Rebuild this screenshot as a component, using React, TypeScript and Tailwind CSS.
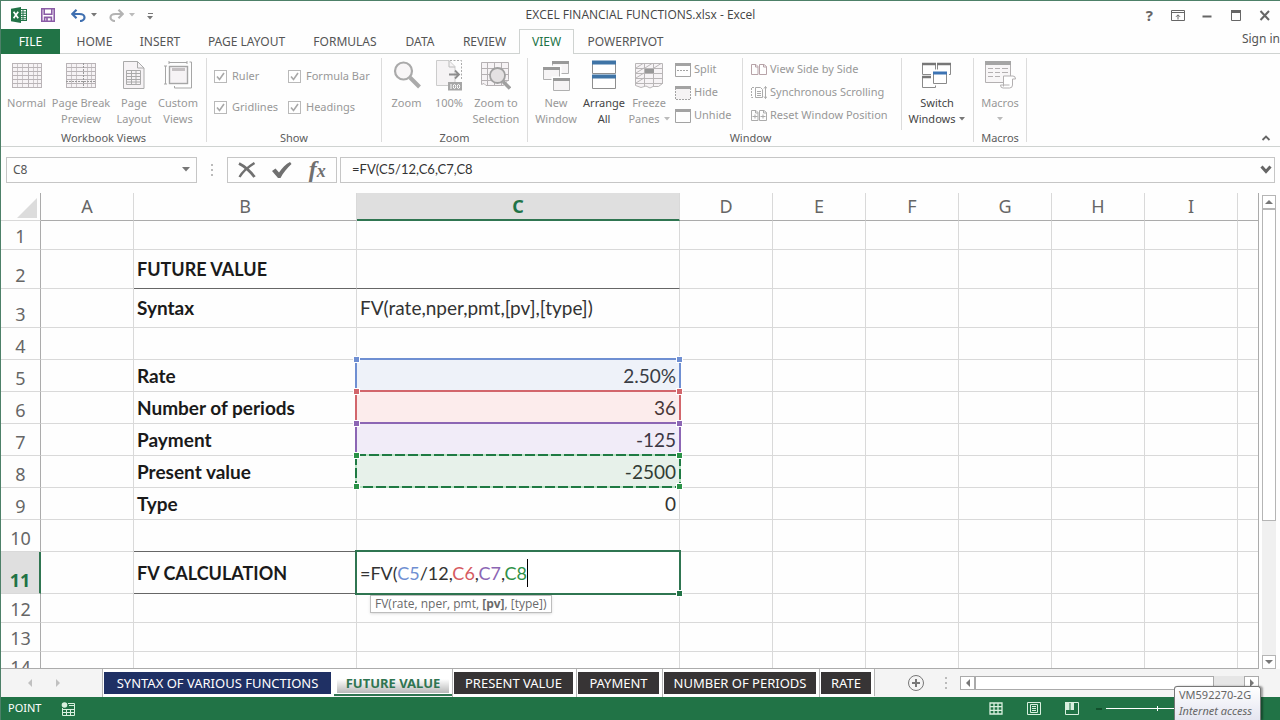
import { useState, type ReactNode } from "react";
import clsx from "clsx";

const COLUMNS = [
  { name: "A", width: "w-[93px]" },
  { name: "B", width: "w-[223px]" },
  { name: "C", width: "w-[323px]" },
  { name: "D", width: "w-[93px]" },
  { name: "E", width: "w-[93px]" },
  { name: "F", width: "w-[93px]" },
  { name: "G", width: "w-[93px]" },
  { name: "H", width: "w-[93px]" },
  { name: "I", width: "w-[93px]" },
];

type Row = {
  n: number;
  height: string;
  label?: string;
  value?: string;
  align?: "left" | "right";
  heading?: boolean;
  rule?: boolean;
  range?: "blue" | "red" | "purple" | "green";
};

const ROWS: Row[] = [
  { n: 1, height: "h-[29px]" },
  { n: 2, height: "h-[39px]", label: "FUTURE VALUE", heading: true, rule: true },
  {
    n: 3,
    height: "h-[39px]",
    label: "Syntax",
    value: "FV(rate,nper,pmt,[pv],[type])",
    align: "left",
  },
  { n: 4, height: "h-8" },
  { n: 5, height: "h-8", label: "Rate", value: "2.50%", range: "blue" },
  { n: 6, height: "h-8", label: "Number of periods", value: "36", range: "red" },
  { n: 7, height: "h-8", label: "Payment", value: "-125", range: "purple" },
  { n: 8, height: "h-8", label: "Present value", value: "-2500", range: "green" },
  { n: 9, height: "h-8", label: "Type", value: "0" },
  { n: 10, height: "h-8", rule: true },
  { n: 11, height: "h-[42px]", label: "FV CALCULATION", heading: true, rule: true },
  { n: 12, height: "h-[29px]" },
  { n: 13, height: "h-[29px]" },
  { n: 14, height: "h-[29px]" },
];

const RANGE_BOX = {
  blue: "border-[#6f8fd2] bg-[#6f8fd2]/11",
  red: "border-[#d2666c] bg-[#ee5a5f]/11",
  purple: "border-[#8c66b4] bg-[#8c5ac8]/11",
  green: "border-transparent bg-[#2e8b47]/11",
};

const RANGE_HANDLE = {
  blue: "bg-[#6f8fd2]",
  red: "bg-[#d2666c]",
  purple: "bg-[#8c66b4]",
  green: "bg-[#2a9247]",
};

const MENU_TABS = [
  { name: "HOME", width: "w-[65px]" },
  { name: "INSERT", width: "w-[66px]" },
  { name: "PAGE LAYOUT", width: "w-[107px]" },
  { name: "FORMULAS", width: "w-[90px]" },
  { name: "DATA", width: "w-[60px]" },
  { name: "REVIEW", width: "w-[69px]" },
  { name: "VIEW", width: "w-[55px]" },
  { name: "POWERPIVOT", width: "w-[103px]" },
];

const SHEETS = [
  { name: "SYNTAX OF VARIOUS FUNCTIONS", style: "w-[227px] bg-[#1f3064] text-white" },
  { name: "FUTURE VALUE", style: "" },
  { name: "PRESENT VALUE", style: "w-[119px] bg-[#373435] text-white" },
  { name: "PAYMENT", style: "w-[81px] bg-[#373435] text-white" },
  { name: "NUMBER OF PERIODS", style: "w-[152px] bg-[#373435] text-white" },
  { name: "RATE", style: "w-[50px] bg-[#373435] text-white" },
];

/* ---------- icons ---------- */

function Caret({ className = "text-[#777]" }: { className?: string }) {
  return (
    <svg width="6" height="4" viewBox="0 0 6 4" className={className}>
      <path d="M0 0h6L3 3.5z" fill="currentColor" />
    </svg>
  );
}

function ExcelLogo() {
  return (
    <svg width="16" height="16" viewBox="0 0 16 16">
      <rect x="8.5" y="2.5" width="7" height="11" fill="#fff" stroke="#217346" />
      <path d="M9 5h6M9 7.3h6M9 9.6h6M9 11.8h6M12 3v10" stroke="#217346" />
      <path d="M0 1.8 10 0v16L0 14.2z" fill="#217346" />
      <path d="M2.6 4.8 7.2 11.2M7.2 4.8 2.6 11.2" stroke="#fff" strokeWidth="1.7" />
    </svg>
  );
}

function SaveIcon() {
  return (
    <svg width="14" height="14" viewBox="0 0 14 14" fill="none" stroke="#8a5ca6" strokeWidth="1.6">
      <path d="M.8.8h12.4v12.4H.8z" />
      <path d="M3.2 1v5.2h7.6V1" />
      <path d="M3.6 13V9.4h6.8V13M6 10v3" />
    </svg>
  );
}

function UndoIcon({ color, flip }: { color: string; flip?: boolean }) {
  return (
    <svg width="15" height="13" viewBox="0 0 15 13" fill="none" stroke={color} strokeWidth="2.2">
      {flip ? (
        <path d="M13.5 5H6.5C3 5 1.5 7 1.5 8.5S3 12 6 12M9.5.8 13.7 5 9.5 9.2" />
      ) : (
        <path d="M1.5 5h7c3.5 0 5 2 5 3.5S12 12 9 12M5.5.8 1.3 5l4.2 4.2" />
      )}
    </svg>
  );
}

function NormalIcon({ breaks }: { breaks?: boolean }) {
  return (
    <svg width="30" height="27" viewBox="0 0 30 27" fill="none" stroke="#b9b4b7">
      <rect x=".5" y="1.5" width="29" height="24" fill="#f6f3f5" />
      <path d="M1 5.500h28M1 9.500h28M1 13.500h28M1 17.500h28M1 21.500h28" />
      <path d="M5.500 2v23M10.500 2v23M21.500 2v23M25.500 2v23" strokeOpacity=".7" />
      {breaks ? (
        <path d="M17.500 1v25M0 19.500h30" stroke="#999" strokeDasharray="2 1" />
      ) : (
        <path d="M16.500 2v23" />
      )}
    </svg>
  );
}

function PageLayoutIcon() {
  return (
    <svg width="22" height="28" viewBox="0 0 22 28" fill="none" stroke="#aaa">
      <path d="M.5.5h14l6.5 6.5v20.5H.5z" fill="#f6f3f5" />
      <path d="M14.5.5V7H21" />
      <path d="M3.500 9.500h14v14h-14zM3.500 12.500h14M3.500 15.500h14M3.500 18.500h14M3.500 21h14M8.500 9.500v14M13 9.500v14" />
    </svg>
  );
}

function CustomViewsIcon() {
  return (
    <svg width="28" height="28" viewBox="0 0 28 28" fill="none" stroke="#a6a6a6">
      <rect x="5.5" y="5.5" width="18" height="17" fill="#f6f3f5" strokeWidth="1.4" />
      <path d="M8 8.500h13" stroke="#c4c0c2" strokeWidth="3" />
      <path d="M5 1.500h18M5 0v3M23 0v3M1.500 5v18M0 5h3M0 23h3M25.500 1h2v26h-17v-2" />
    </svg>
  );
}

function ZoomIcon() {
  return (
    <svg width="28" height="28" viewBox="0 0 28 28" fill="none" stroke="#aaa">
      <circle cx="10.500" cy="10" r="8.500" strokeWidth="2.200" fill="#f8f6f7" />
      <path d="M17 16.500 26.500 26" strokeWidth="4" />
    </svg>
  );
}

function HundredIcon() {
  return (
    <svg width="28" height="32" viewBox="0 0 28 32" fill="none" stroke="#ababab">
      <path d="M1.5 1.5H14l6 6v19h-18.5z" fill="#f5f3f4" stroke="#ccc" />
      <path d="M14 1.5V8h6" stroke="#bbb" />
      <path d="M15 1.5h11.5v20" strokeDasharray="2 1.5" />
      <path d="M14 15.5h9M20 11.500l4 4-4 4" stroke="#8d8d8d" strokeWidth="1.8" />
      <rect x="13" y="23" width="14" height="8.5" fill="#a6a6a6" stroke="none" />
      <path d="M16 25v5" stroke="#fff" />
      <ellipse cx="19.5" cy="27.5" rx="1.2" ry="2" stroke="#fff" />
      <ellipse cx="23.5" cy="27.5" rx="1.2" ry="2" stroke="#fff" />
    </svg>
  );
}

function ZoomSelectionIcon() {
  return (
    <svg width="30" height="30" viewBox="0 0 30 30" fill="none" stroke="#b5b1b3">
      <path d="M.5 2.500h27v17l-5 6H5l-2-2-2.500 1z" fill="#f6f3f5" />
      <path d="M1 8.500h27M1 14.500h27M1 20.500h27M6.500 3v22M13.500 3v22M20.500 3v22" />
      <circle cx="16.5" cy="15.5" r="7.5" fill="#e4e1e2" stroke="#a0a0a0" strokeWidth="1.8" />
      <path d="M22 21.500 29 28.500" stroke="#a0a0a0" strokeWidth="3.5" />
    </svg>
  );
}

function NewWindowIcon() {
  return (
    <svg width="28" height="31" viewBox="0 0 28 31" fill="#f6f4f5" stroke="#b0b0b0">
      <path d="M10.500 1.500h16v12h-16z" />
      <path d="M10 2.500h17" stroke="#999" strokeWidth="3" />
      <path d="M1 7h17v13H1z" stroke="#fff" strokeWidth="3" />
      <path d="M1.500 7.500h16v12h-16z" />
      <path d="M1 8.500h17" stroke="#999" strokeWidth="3" />
      <path d="M11 18h17v13H11z" stroke="#fff" strokeWidth="3" />
      <path d="M11.500 18.500h16v12h-16z" />
      <path d="M11 19.500h17" stroke="#999" strokeWidth="3" />
    </svg>
  );
}

function ArrangeIcon() {
  return (
    <svg width="24" height="30" viewBox="0 0 24 30" fill="#fff" stroke="#8e8e8e">
      <path d="M.5 1.500h23v12H.5zM.5 15.500h23v13H.5z" />
      <path d="M0 2.500h24M0 16.500h24" stroke="#3f74a6" strokeWidth="4" />
    </svg>
  );
}

function FreezeIcon() {
  return (
    <svg width="28" height="28" viewBox="0 0 28 28" fill="none" stroke="#b9b6b7">
      <path d="M.5 2.500h27v20l-4 3H18l-3 1.500-4-2-5 1.500-5.500-2z" fill="#f6f3f5" />
      <path d="M0 7.500h28M0 12.500h28M0 17.500h28M0 22.500h28M9.500 2v23M18.500 2v23" />
      <path d="m1 7 7-4.500M10 7l7-4.500M19 7l7-4.500M1 12l8-5M1 17l8-5M1 22l8-5" />
      <rect x="10" y="8" width="9" height="4" fill="#989898" stroke="none" />
    </svg>
  );
}

function PaneIcon({ kind }: { kind: "split" | "hide" | "unhide" }) {
  return (
    <svg width="16" height="14" viewBox="0 0 16 14" fill="none" stroke="#a3a3a3">
      {kind === "hide" ? (
        <path d="M.5 2v11.500h15V2" strokeDasharray="2 1" fill="#f5f3f4" />
      ) : (
        <path d="M.5 2v11.500h15V2" />
      )}
      <path d="M0 1.500h16" strokeWidth="3" />
      {kind === "split" && <path d="M2 7.500h12" strokeDasharray="2 1" />}
    </svg>
  );
}

function PagesIcon({ kind }: { kind: "side" | "sync" | "reset" }) {
  return (
    <svg width="16" height="13" viewBox="0 0 16 13" fill="none" stroke={kind === "side" ? "#b7a3a8" : "#ababab"}>
      {kind === "sync" ? (
        <>
          <path d="M3 1.500H.5v10H3" strokeDasharray="2 1" />
          <path d="M4.500 1.500h5l2 2v8h-7zM6 5.500h4M6 7.500h4M6 9.500h4" />
          <path d="M14.500.5v12M13 2.500l1.500-2 1.500 2M13 10.500l1.500 2 1.500-2" />
        </>
      ) : (
        <>
          <path d="M.5 1.500H5l2 2v8H.5zM8.500 1.500H13l2.500 2v8h-7z" />
          <path d="M4.500 1.500v2.500h2.500M12.500 1.500v2.500h3" />
        </>
      )}
      {kind === "reset" && <path d="M1.500 7.500h5M4 5.500v4M9.500 7.500h5M12 5.500v4" />}
    </svg>
  );
}

function SwitchIcon() {
  return (
    <svg width="30" height="27" viewBox="0 0 30 27" fill="#fff" stroke="#8a8a8a">
      <path d="M13.500 12.500H.5v-11h13zM28.500 12.500h-13v-11h13z" />
      <path d="M0 2h14M15 2h14" stroke="#777" strokeWidth="2.5" />
      <path d="M13.500 25.500H.5v-11h13z" />
      <path d="M0 15h14" stroke="#777" strokeWidth="2.5" />
      <rect x="10.500" y="9" width="15" height="13" stroke="#fff" strokeWidth="3" />
      <path d="M11.500 10.500h13v11h-13z" />
      <path d="M11 11h14" stroke="#3d74b4" strokeWidth="3" />
    </svg>
  );
}

function MacrosIcon() {
  return (
    <svg width="31" height="30" viewBox="0 0 31 30" fill="none" stroke="#b3b0b1">
      <path d="M.5 1.500h25v21H.5z" fill="#f8f6f7" />
      <path d="M0 3h26" stroke="#a5a5a5" strokeWidth="4" />
      <path d="M3 8.500h5M10 8.500h5M17 8.500h6M3 12.500h5M10 12.500h5M17 12.500h6M3 16.500h5M10 16.500h5" />
      <path d="M18.500 26.500V16h9.500q2.500 0 2.500 3h-3v6q0 3-3 3H18q-2.500 0-2.500-3h9" fill="#fff" />
    </svg>
  );
}

/* ---------- ribbon parts ---------- */

function BigButton({
  icon,
  lines,
  width,
  active,
  menu,
}: {
  icon: ReactNode;
  lines: string[];
  width: string;
  active?: boolean;
  menu?: boolean;
}) {
  return (
    <button
      className={clsx(
        "flex flex-col items-center shrink-0 whitespace-nowrap pt-px leading-4",
        width,
        active ? "text-[#444]" : "text-[#989898]"
      )}
    >
      <span className="flex h-8 items-center justify-center">{icon}</span>
      <span className="mt-1">{lines[0]}</span>
      <span className="flex h-4 items-center gap-1">
        {lines[1]}
        {menu && <Caret className={active ? "text-[#777]" : "text-[#bbb]"} />}
      </span>
    </button>
  );
}

function SmallButton({ icon, label }: { icon: ReactNode; label: string }) {
  return (
    <button className="flex h-[23px] items-center gap-[3px] whitespace-nowrap text-[#989898]">
      {icon}
      {label}
    </button>
  );
}

function CheckOption({ label, width }: { label: string; width: string }) {
  return (
    <label className={clsx("relative flex h-[31px] items-center gap-[5px] whitespace-nowrap text-[#989898]", width)}>
      <input
        type="checkbox"
        defaultChecked
        disabled
        className="h-[13px] w-[13px] appearance-none border border-[#b9b9b9] bg-white"
      />
      <svg width="9" height="9" viewBox="0 0 9 9" className="absolute left-[2px] top-[11px]">
        <path d="M1 4.500 3.500 7.500 8 1" fill="none" stroke="#a8a8a8" strokeWidth="1.6" />
      </svg>
      {label}
    </label>
  );
}

function Group({ title, width, children }: { title: string; width: string; children: ReactNode }) {
  return (
    <section className={clsx("my-1 flex shrink-0 flex-col border-r border-[#dcdcdc]", width)}>
      <div className="flex h-[72px] shrink-0">{children}</div>
      <h2 className="text-center leading-4 text-[#5c5c5c]">{title}</h2>
    </section>
  );
}

function Ribbon() {
  return (
    <div className="flex h-[93px] shrink-0 border-b border-[#cfd3d1] text-[11px]">
      <Group title="Workbook Views" width="w-[206px]">
        <BigButton icon={<NormalIcon />} lines={["Normal"]} width="w-[51px]" />
        <BigButton icon={<NormalIcon breaks />} lines={["Page Break", "Preview"]} width="w-[58px]" />
        <BigButton icon={<PageLayoutIcon />} lines={["Page", "Layout"]} width="w-12" />
        <BigButton icon={<CustomViewsIcon />} lines={["Custom", "Views"]} width="w-10" />
      </Group>
      <Group title="Show" width="w-[175px]">
        <div className="flex flex-wrap content-start pl-[7px] pt-[3px]">
          <CheckOption label="Ruler" width="w-[74px]" />
          <CheckOption label="Formula Bar" width="w-[84px]" />
          <CheckOption label="Gridlines" width="w-[74px]" />
          <CheckOption label="Headings" width="w-[84px]" />
        </div>
      </Group>
      <Group title="Zoom" width="w-[146px]">
        <BigButton icon={<ZoomIcon />} lines={["Zoom"]} width="w-[49px]" />
        <BigButton icon={<HundredIcon />} lines={["100%"]} width="w-9" />
        <BigButton icon={<ZoomSelectionIcon />} lines={["Zoom to", "Selection"]} width="w-[58px]" />
      </Group>
      <Group title="Window" width="w-[446px]">
        <BigButton icon={<NewWindowIcon />} lines={["New", "Window"]} width="w-14" />
        <BigButton icon={<ArrangeIcon />} lines={["Arrange", "All"]} width="w-10" active />
        <BigButton icon={<FreezeIcon />} lines={["Freeze", "Panes"]} width="w-[50px]" menu />
        <div className="flex w-[69px] flex-col border-r border-[#dcdcdc] pl-px">
          <SmallButton icon={<PaneIcon kind="split" />} label="Split" />
          <SmallButton icon={<PaneIcon kind="hide" />} label="Hide" />
          <SmallButton icon={<PaneIcon kind="unhide" />} label="Unhide" />
        </div>
        <div className="flex w-[159px] flex-col border-r border-[#dcdcdc] pl-2">
          <SmallButton icon={<PagesIcon kind="side" />} label="View Side by Side" />
          <SmallButton icon={<PagesIcon kind="sync" />} label="Synchronous Scrolling" />
          <SmallButton icon={<PagesIcon kind="reset" />} label="Reset Window Position" />
        </div>
        <BigButton icon={<SwitchIcon />} lines={["Switch", "Windows"]} width="w-[70px]" active menu />
      </Group>
      <Group title="Macros" width="w-[53px]">
        <BigButton icon={<MacrosIcon />} lines={["Macros", ""]} width="w-[52px]" menu />
      </Group>
      <button aria-label="Collapse ribbon" className="mb-1 ml-auto mr-[9px] self-end">
        <svg width="10" height="8" viewBox="0 0 10 8" fill="none" stroke="#666" strokeWidth="1.8">
          <path d="m1.500 6 3.500-3.500L8.500 6" />
        </svg>
      </button>
    </div>
  );
}

function TitleBar() {
  return (
    <header className="relative flex h-[29px] shrink-0 items-center border-t border-[#4d8068] pl-[10px] pr-2">
      <ExcelLogo />
      <button aria-label="Save" className="ml-[14px]">
        <SaveIcon />
      </button>
      <button aria-label="Undo" className="ml-4 flex items-center gap-[5px]">
        <UndoIcon color="#3f6fb0" />
        <Caret />
      </button>
      <button aria-label="Redo" className="ml-3 flex items-center gap-[5px]">
        <UndoIcon color="#b3b3b3" flip />
        <Caret className="text-[#bbb]" />
      </button>
      <button aria-label="Customize toolbar" className="ml-3 flex flex-col items-center gap-[2px] pt-[2px]">
        <span className="h-px w-[5px] bg-[#777]" />
        <Caret />
      </button>
      <h1 className="pointer-events-none absolute inset-x-0 text-center font-['Open_Sans',sans-serif] text-[12px] text-[#444]">
        EXCEL FINANCIAL FUNCTIONS.xlsx - Excel
      </h1>
      <div className="ml-auto flex items-center gap-[15px] text-[#666]">
        <button aria-label="Help" className="mr-[3px] text-[15px] font-bold leading-4 text-[#666]">
          ?
        </button>
        <button aria-label="Ribbon display options">
          <svg width="14" height="11" viewBox="0 0 14 11" fill="none" stroke="currentColor">
            <path d="M.5.5h13v10H.5zM1 2.500h12M7 9.500V5M5 6.800 7 4.800l2 2" />
          </svg>
        </button>
        <button aria-label="Minimize">
          <svg width="14" height="12" viewBox="0 0 14 12">
            <path d="M2.500 7.500h9" stroke="currentColor" strokeWidth="2" />
          </svg>
        </button>
        <button aria-label="Restore">
          <svg width="14" height="11" viewBox="0 0 14 11" fill="none" stroke="currentColor">
            <path d="M2.500.5h9v10h-9z" />
            <path d="M2 1.500h10" strokeWidth="3" />
          </svg>
        </button>
        <button aria-label="Close">
          <svg width="14" height="11" viewBox="0 0 14 11" stroke="currentColor" strokeWidth="2">
            <path d="M2.500 1 11 10M11 1 2.500 10" />
          </svg>
        </button>
      </div>
    </header>
  );
}

function MenuTabs() {
  return (
    <nav className="flex h-[25px] shrink-0 text-[12px] text-[#555]">
      <button className="w-[59px] bg-[#217346] text-white">FILE</button>
      <div className="w-[2px] border-b border-[#cfd3d1]" />
      {MENU_TABS.map((tab) => (
        <button
          key={tab.name}
          className={clsx(
            "whitespace-nowrap",
            tab.width,
            tab.name === "VIEW"
              ? "border border-b-0 border-[#cfd3d1] text-[#217346]"
              : "border-b border-[#cfd3d1] pt-px"
          )}
        >
          {tab.name}
        </button>
      ))}
      <div className="flex flex-1 justify-end border-b border-[#cfd3d1]">
        <a href="#signin" className="pt-px">
          Sign in
        </a>
      </div>
    </nav>
  );
}

function Dots() {
  return (
    <div className="flex flex-col gap-[3px]">
      <i className="h-[2px] w-[2px] bg-[#bbb]" />
      <i className="h-[2px] w-[2px] bg-[#bbb]" />
      <i className="h-[2px] w-[2px] bg-[#bbb]" />
    </div>
  );
}

function FormulaBar({ formula, onChange }: { formula: string; onChange: (v: string) => void }) {
  return (
    <div className="flex h-[46px] shrink-0 items-center pb-px pl-[5px] pr-[5px]">
      <div className="flex h-[26px] w-[191px] items-center border border-[#c6c6c6] pr-[6px]">
        <input
          aria-label="Name box"
          defaultValue="C8"
          className="min-w-0 flex-1 pl-[6px] text-[12px] text-[#555] outline-none"
        />
        <button aria-label="Open name list">
          <svg width="8" height="5" viewBox="0 0 8 5">
            <path d="M0 0h8L4 4.500z" fill="#777" />
          </svg>
        </button>
      </div>
      <div className="flex w-[30px] justify-center">
        <Dots />
      </div>
      <div className="flex h-[26px] w-[110px] items-center justify-around border border-[#c6c6c6] px-[2px] text-[#707070]">
        <button aria-label="Cancel">
          <svg width="18" height="16" viewBox="0 0 18 16" fill="none" stroke="currentColor">
            <path d="M1 1.500C6 4 12 9 16.500 15" strokeWidth="2.8" />
            <path d="M16.500 1C10 5 5 9 1.500 15" strokeWidth="2.4" />
          </svg>
        </button>
        <button aria-label="Enter">
          <svg width="20" height="16" viewBox="0 0 20 16" fill="currentColor">
            <path d="M0 9 3.500 6.500l3.500 4C10 6 14 2 18 0l1.500 2C15 6 11 11 8.500 16H6z" />
          </svg>
        </button>
        <button
          aria-label="Insert function"
          className="font-['Liberation_Serif',serif] text-[24px] font-bold italic leading-6"
        >
          f<span className="text-[18px]">x</span>
        </button>
      </div>
      <div className="ml-[3px] flex h-[26px] flex-1 items-center border border-[#c6c6c6] pr-[2px]">
        <input
          aria-label="Formula bar"
          value={formula}
          onChange={(e) => onChange(e.target.value)}
          className="min-w-0 flex-1 pl-[11px] font-[Lato,sans-serif] text-[13px] text-[#333] outline-none"
        />
        <button aria-label="Expand formula bar">
          <svg width="12" height="9" viewBox="0 0 12 9" fill="none" stroke="#666" strokeWidth="3">
            <path d="m1.500 1.500 4.500 5 4.500-5" />
          </svg>
        </button>
      </div>
    </div>
  );
}

/* ---------- sheet ---------- */

function RangeBox({ color }: { color: keyof typeof RANGE_BOX }) {
  const handle = clsx("absolute h-[5px] w-[5px] outline outline-white", RANGE_HANDLE[color]);
  return (
    <div className={clsx("absolute -left-[2px] -right-[2px] -top-[2px] -bottom-px z-10 border-2", RANGE_BOX[color])}>
      {color === "green" && (
        <svg className="absolute -left-[2px] -top-[2px] h-[34px] w-[326px]" fill="none" strokeWidth="2">
          <rect x="1" y="1" width="324" height="32" stroke="#b9e3c4" />
          <rect x="1" y="1" width="324" height="32" stroke="#1f7a43" strokeDasharray="10 3" />
        </svg>
      )}
      <i className={clsx(handle, "-left-[3px] -top-[3px]")} />
      <i className={clsx(handle, "-right-[3px] -top-[3px]")} />
      {color === "green" && (
        <>
          <i className={clsx(handle, "-left-[3px] -bottom-[3px]")} />
          <i className={clsx(handle, "-right-[3px] -bottom-[3px]")} />
        </>
      )}
    </div>
  );
}

function EditingCell() {
  return (
    <div className="absolute -left-[2px] -right-[2px] -top-[2px] -bottom-[2px] z-20 flex items-center border-2 border-[#2f7551] bg-white pl-[3px] text-[18px]">
      <span>
        =FV(<span className="text-[#6f8fd2]">C5</span>/12,
        <span className="text-[#d65a62]">C6</span>,<span className="text-[#8c66b4]">C7</span>,
        <span className="text-[#2f9148]">C8</span>
      </span>
      <span className="h-7 w-px bg-black" />
      <i className="absolute -bottom-[3px] -right-[3px] h-[5px] w-[5px] bg-[#217346] outline outline-white" />
      <div className="absolute left-[13px] top-[43px] h-[18px] whitespace-nowrap border border-[#bdbdbd] bg-white px-1 font-['Open_Sans',sans-serif] text-[12px] leading-4 text-[#6a6a6a] shadow-sm">
        FV(rate, nper, pmt, <b>[pv]</b>, [type])
      </div>
    </div>
  );
}

function Sheet() {
  return (
    <div className="min-w-0 flex-1 overflow-hidden border-b border-r border-[#ababab]">
      <table className="w-full table-fixed border-separate border-spacing-0 text-[18px] leading-6 text-[#333]">
        <colgroup>
          <col className="w-10" />
          {COLUMNS.map((c) => (
            <col key={c.name} className={c.width} />
          ))}
          <col />
        </colgroup>
        <thead>
          <tr className="h-7">
            <th className="border-b border-r border-[#d9d9d9] border-r-[#ababab] p-0" aria-label="Select all">
              <svg width="20" height="20" viewBox="0 0 20 20" className="ml-auto mr-[3px] mt-[2px]">
                <path d="M20 0v20H0z" fill="#dcdcdc" />
              </svg>
            </th>
            {COLUMNS.map((c) => (
              <th
                key={c.name}
                className={clsx(
                  "border-r border-[#d9d9d9] p-0",
                  c.name === "C"
                    ? "border-b-2 border-b-[#2f7551] bg-[#dfdfdf] font-bold text-[#217346]"
                    : "border-b border-b-[#ababab] pb-px font-normal text-[#666]"
                )}
              >
                {c.name}
              </th>
            ))}
            <th className="border-b border-[#ababab] p-0" />
          </tr>
        </thead>
        <tbody>
          {ROWS.map((row) => (
            <tr key={row.n} className={row.height}>
              <th
                className={clsx(
                  "border-b border-b-[#d9d9d9] p-0 pb-px align-bottom",
                  row.n === 11
                    ? "border-r-2 border-r-[#2f7551] bg-[#dfdfdf] font-bold text-[#217346]"
                    : "border-r border-r-[#ababab] font-normal text-[#666]"
                )}
              >
                {row.n}
              </th>
              {COLUMNS.map((c) => (
                <td
                  key={c.name}
                  className={clsx(
                    "relative whitespace-nowrap border-b border-r border-r-[#d9d9d9] p-0 px-[3px] font-[Lato,sans-serif]",
                    row.heading ? "text-[18px]" : "text-[19px]",
                    row.rule && (c.name === "B" || c.name === "C") ? "border-b-[#666]" : "border-b-[#d9d9d9]",
                    c.name === "B" && "font-bold text-[#1a1a1a]",
                    c.name === "C" && row.align !== "left" && row.n !== 11 && "text-right"
                  )}
                >
                  {c.name === "B" && row.label}
                  {c.name === "C" && row.value}
                  {c.name === "C" && row.range && <RangeBox color={row.range} />}
                  {c.name === "C" && row.n === 11 && <EditingCell />}
                </td>
              ))}
              <td className="border-b border-[#d9d9d9] p-0" />
            </tr>
          ))}
        </tbody>
      </table>
    </div>
  );
}

function Arrow({ dir }: { dir: "up" | "down" | "left" | "right" }) {
  const d = {
    up: "M0 6h8L4 2z",
    down: "M0 2h8L4 6z",
    left: "M6 0v8L2 4z",
    right: "M2 0v8l4-4z",
  }[dir];
  return (
    <svg width="8" height="8" viewBox="0 0 8 8">
      <path d={d} fill="currentColor" />
    </svg>
  );
}

function VerticalScroll() {
  const box = "flex h-[14px] w-[14px] items-center justify-center border border-[#b5b5b5] bg-white text-[#777]";
  return (
    <div className="ml-[3px] mr-[3px] mt-[2px] flex w-[15px] flex-col">
      <button aria-label="Scroll up" className={box}>
        <Arrow dir="up" />
      </button>
      <div className="flex w-[14px] flex-1 flex-col bg-[#f0f0f0]">
        <div className="h-[70%] border border-[#b5b5b5] bg-white" />
      </div>
      <button aria-label="Scroll down" className={box}>
        <Arrow dir="down" />
      </button>
    </div>
  );
}

function SheetTabs({ active, onSelect }: { active: string; onSelect: (s: string) => void }) {
  return (
    <div className="flex h-[28px] shrink-0 items-start bg-[#f4f4f4] pr-[21px] text-[13px]">
      <div className="flex h-7 w-[101px] items-center gap-[20px] pl-[25px] text-[#c0c0c0]">
        <button aria-label="Previous sheet">
          <Arrow dir="left" />
        </button>
        <button aria-label="Next sheet">
          <Arrow dir="right" />
        </button>
      </div>
      {SHEETS.map((s) => (
        <div
          key={s.name}
          className={clsx(
            "flex shrink-0 bg-white",
            s.name === active
              ? "h-[27px] border-b-2 border-[#2f7551] px-[3px] pb-px pt-1"
              : "h-7 border-l border-[#b5b5b5] pb-[3px] pl-px pr-[3px] pt-[3px]"
          )}
        >
          <button
            onClick={() => onSelect(s.name)}
            className={clsx(
              "whitespace-nowrap",
              s.name === active
                ? "w-28 bg-linear-to-b from-white from-30% to-[#b9b9b9] font-bold leading-[18px] text-[#2f7551]"
                : clsx("leading-[20px]", s.style || "w-28 text-[#555]")
            )}
          >
            {s.name}
          </button>
        </div>
      ))}
      <div className="flex h-[27px] w-[86px] items-center border-l border-[#b5b5b5] pl-[32px]">
        <button aria-label="New sheet">
          <svg width="18" height="18" viewBox="0 0 18 18" fill="none" stroke="#777">
            <circle cx="9" cy="9" r="7.5" />
            <path d="M9 5v8M5 9h8" strokeWidth="2" />
          </svg>
        </button>
        <div className="ml-5">
          <Dots />
        </div>
      </div>
      <div className="mt-[7px] flex h-[14px] flex-1 bg-[#e6e6e6] text-[#777]">
        <button aria-label="Scroll left" className="flex w-[15px] items-center justify-center border border-[#aaa] bg-white">
          <Arrow dir="left" />
        </button>
        <div className="mr-[30px] flex-1 border border-[#aaa] bg-white" />
        <button aria-label="Scroll right" className="flex w-[15px] items-center justify-center border border-[#aaa] bg-white">
          <Arrow dir="right" />
        </button>
      </div>
    </div>
  );
}

function StatusBar() {
  return (
    <footer className="relative flex h-[23px] shrink-0 items-center bg-[#217346] pl-[7px] text-[11px] text-white">
      <span className="w-[53px]">POINT</span>
      <button aria-label="Record macro">
        <svg width="14" height="14" viewBox="0 0 14 14" fill="none" stroke="#d9f0df">
          <path d="M1.500 6v7.500h12v-12H7M2 7.500h11M2 10.500h11M5.500 7v6M9.500 7v6M8 3.500h5" />
          <circle cx="3.500" cy="3" r="2.800" fill="#d9f0df" stroke="none" />
        </svg>
      </button>
      <div className="ml-auto flex items-center gap-6 text-[#d9f0df]">
        <button aria-label="Normal view">
          <svg width="14" height="13" viewBox="0 0 14 13" fill="none" stroke="currentColor" strokeWidth="1.3">
            <path d="M1 1h12v11H1zM1 4.700h12M1 8.400h12M5 1v11M9 1v11" />
          </svg>
        </button>
        <button aria-label="Page layout view">
          <svg width="14" height="13" viewBox="0 0 14 13" fill="none" stroke="currentColor">
            <path d="M.5.5h13v12H.5zM3.500 2.500h7v8h-7zM5 4.500h4M5 6.500h4M5 8.500h4" />
          </svg>
        </button>
        <button aria-label="Page break view">
          <svg width="14" height="13" viewBox="0 0 14 13" fill="none" stroke="currentColor">
            <path d="M.5.5h13v12H.5z" />
            <path d="M0 0h4.500v8H0zM5.500 0H9v8H5.500z" fill="currentColor" stroke="none" />
            <path d="M1 9.500h9.500V1" stroke="#217346" />
          </svg>
        </button>
      </div>
      <button aria-label="Zoom out" className="ml-[17px] h-[2px] w-[6px] bg-[#12502c]" />
      <div className="relative ml-1 mr-[72px] flex w-[102px] items-center">
        <input
          aria-label="Zoom level"
          type="range"
          defaultValue={90}
          className="h-px w-full appearance-none bg-white [&::-webkit-slider-thumb]:h-3 [&::-webkit-slider-thumb]:w-1 [&::-webkit-slider-thumb]:appearance-none [&::-webkit-slider-thumb]:bg-white"
        />
        <i className="absolute left-1/2 h-[5px] w-px bg-white" />
      </div>
      <div className="absolute bottom-0 right-[19px] h-[34px] w-[87px] rounded-t-[3px] border border-b-0 border-[#777] bg-linear-to-b from-white to-[#e4e5f0] pl-1 text-[11px] leading-4 text-[#666] shadow-[2px_0_2px_rgba(0,0,0,0.35)]">
        <div>VM592270-2G</div>
        <div className="italic">Internet access</div>
      </div>
    </footer>
  );
}

export default function App() {
  const [formula, setFormula] = useState("=FV(C5/12,C6,C7,C8");
  const [sheet, setSheet] = useState("FUTURE VALUE");

  return (
    <div className="flex h-screen flex-col overflow-hidden border-l border-[#4d8068] bg-[#fefefe] font-['Noto_Sans','Open_Sans',sans-serif]">
      <TitleBar />
      <MenuTabs />
      <Ribbon />
      <FormulaBar formula={formula} onChange={setFormula} />
      <main className="flex min-h-0 flex-1">
        <Sheet />
        <VerticalScroll />
      </main>
      <SheetTabs active={sheet} onSelect={setSheet} />
      <StatusBar />
    </div>
  );
}
